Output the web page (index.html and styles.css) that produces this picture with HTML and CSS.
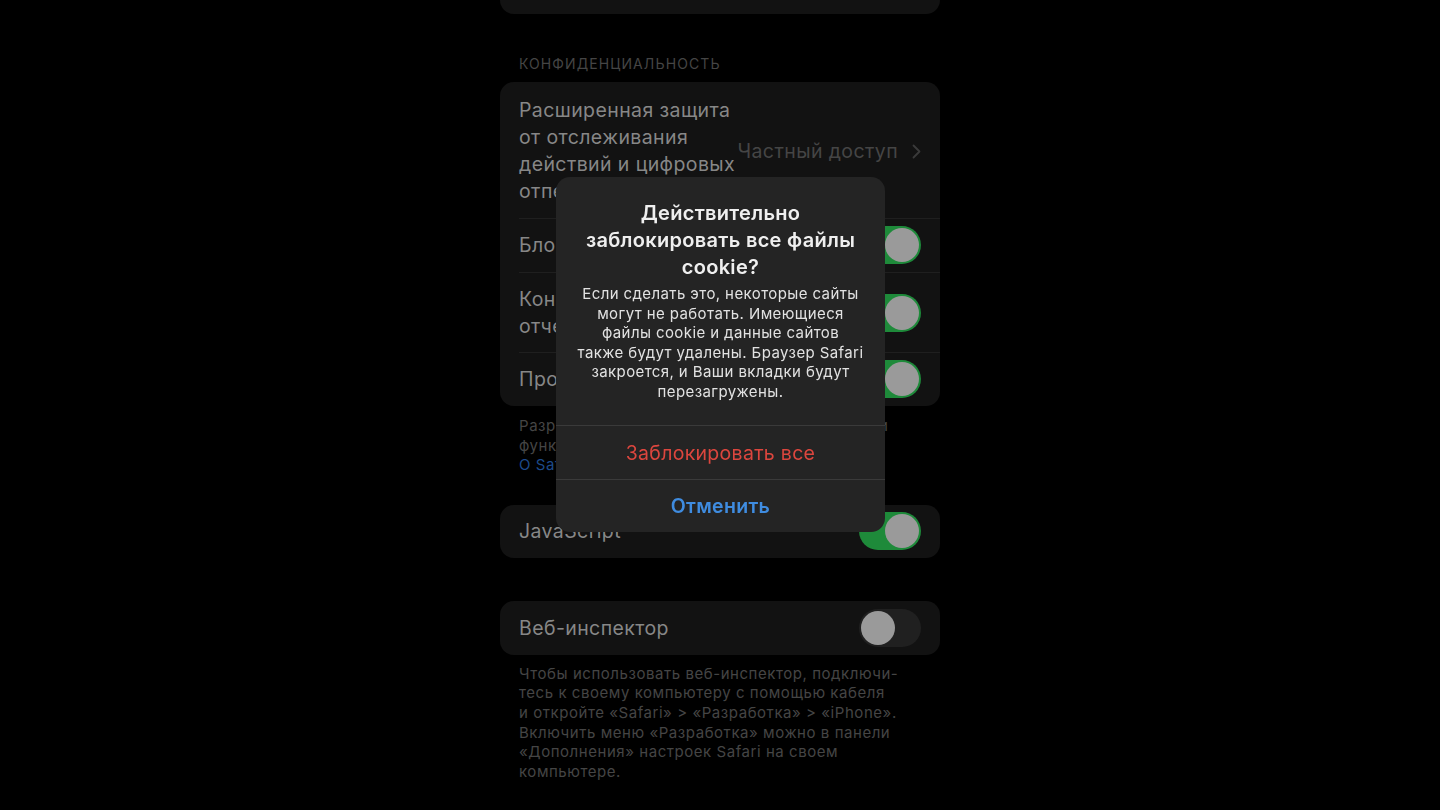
FILE: index.html
```html
<!DOCTYPE html>
<html lang="ru">

<head>
  <meta charset="UTF-8" />
  <meta name="viewport" content="width=device-width, initial-scale=1.0" />
  <title>Safari</title>
  <link rel="stylesheet" href="styles.css">
</head>

<body>
  <div class="screen">
    <div class="group group-top">
      <div class="row"></div>
    </div>

    <div class="section-header">Конфиденциальность</div>
    <div class="group">
      <div class="row row-tall">
        <span class="row-label">Расширенная защита<br>от отслеживания<br>действий и цифровых<br>отпечатков</span>
        <span class="row-value">Частный доступ</span>
        <svg class="chevron" width="9" height="15" viewBox="0 0 9 15">
          <path d="M1.5 1.5 L7.5 7.5 L1.5 13.5" fill="none" stroke="currentColor" stroke-width="1.8" stroke-linecap="round" stroke-linejoin="round" />
        </svg>
      </div>
      <div class="row">
        <span class="row-label">Блокировка всех cookie</span>
        <span class="toggle on"></span>
      </div>
      <div class="row row-double">
        <span class="row-label">Конфиденциальные<br>отчеты о рекламе</span>
        <span class="toggle on"></span>
      </div>
      <div class="row">
        <span class="row-label">Проверка Apple Pay</span>
        <span class="toggle on"></span>
      </div>
    </div>
    <div class="section-footer footer-first">
      Разрешить веб-сайтам проверять, включен ли<br>функционал Apple Pay и Apple Card.<br>
      <span class="link">О Safari и конфиденциальности…</span>
    </div>

    <div class="group group-js">
      <div class="row">
        <span class="row-label">JavaScript</span>
        <span class="toggle on"></span>
      </div>
    </div>

    <div class="group group-inspector">
      <div class="row">
        <span class="row-label">Веб-инспектор</span>
        <span class="toggle"></span>
      </div>
    </div>
    <div class="section-footer footer-last">
      Чтобы использовать веб-инспектор, подключи-<br>тесь к своему компьютеру с помощью кабеля<br>и откройте «Safari» &gt; «Разработка» &gt; «iPhone».<br>
      Включить меню «Разработка» можно в панели<br>«Дополнения» настроек Safari на своем<br>компьютере.
    </div>
  </div>

  <div class="overlay">
    <div class="alert">
      <div class="alert-body">
        <div class="alert-title">Действительно<br>заблокировать все файлы<br>cookie?</div>
        <div class="alert-message">Если сделать это, некоторые сайты<br>могут не работать. Имеющиеся<br>файлы cookie и данные сайтов<br>также будут удалены. Браузер Safari<br>закроется, и Ваши вкладки будут<br>перезагружены.</div>
      </div>
      <button class="alert-action destructive">Заблокировать все</button>
      <button class="alert-action cancel">Отменить</button>
    </div>
  </div>
</body>

</html>
```

FILE: styles.css
```css
:root {
  --card-bg: #121212;
  --separator: #1f1f1f;
  --label-color: #878787;
  --muted-color: #454545;
  --green: #1e8a3a;
  --knob: #9a9a9a;
}

html,
body {
  height: 100%;
}

body {
  margin: 0;
  background-color: #000;
  font-family: 'Inter', 'Noto Sans', sans-serif;
  overflow: hidden;
}

.screen {
  width: 440px;
  margin: 0 auto;
}

.group {
  background-color: var(--card-bg);
  border-radius: 14px;
  overflow: hidden;
}

.group-top {
  margin-top: -40px;
}

.row {
  display: flex;
  align-items: center;
  min-height: 54px;
  padding: 1px 19px 0;
  box-sizing: border-box;
  position: relative;
  font-size: 19.5px;
  line-height: 27px;
  color: var(--label-color);
  letter-spacing: 0.4px;
}

.row + .row::before {
  content: '';
  position: absolute;
  top: 0;
  left: 19px;
  right: 0;
  height: 1px;
  background-color: var(--separator);
}

.row-tall {
  padding-top: 15px;
  padding-bottom: 13px;
}

.row-double {
  padding-top: 14px;
  padding-bottom: 12px;
  min-height: 80px;
}

.row-label {
  flex: 1;
  white-space: nowrap;
}

.row-value {
  color: var(--muted-color);
  margin-right: 14px;
}

.chevron {
  color: #3a3a3a;
}

.toggle {
  width: 62px;
  height: 38px;
  border-radius: 19px;
  background-color: #202020;
  position: relative;
  flex-shrink: 0;
  margin-top: -1px;
}

.toggle::after {
  content: '';
  position: absolute;
  top: 2px;
  left: 2px;
  width: 34px;
  height: 34px;
  border-radius: 50%;
  background-color: var(--knob);
}

.toggle.on {
  background-color: var(--green);
}

.toggle.on::after {
  left: 26px;
}

.section-header {
  padding: 41px 19px 9px;
  font-size: 14px;
  line-height: 18px;
  color: var(--muted-color);
  text-transform: uppercase;
  letter-spacing: 1.1px;
}

.section-footer {
  padding: 0 19px;
  font-size: 15px;
  line-height: 19.6px;
  color: var(--muted-color);
  white-space: nowrap;
  letter-spacing: 0.55px;
}

.footer-first {
  padding-top: 10px;
}

.footer-last {
  padding-top: 9px;
}

.link {
  color: #1d4a8a;
}

.group-js {
  margin-top: 30px;
}

.group-js .row {
  min-height: 53px;
}

.group-inspector {
  margin-top: 43px;
}

.overlay {
  position: fixed;
  inset: 0;
  display: flex;
  justify-content: center;
  align-items: flex-start;
  padding-top: 177px;
}

.alert {
  width: 329px;
  background-color: #242424;
  border-radius: 14px;
  overflow: hidden;
  text-align: center;
  margin-left: 1px;
}

.alert-body {
  padding: 23px 10px 24px;
}

.alert-title {
  font-size: 20px;
  line-height: 27px;
  font-weight: 600;
  color: #efefef;
  letter-spacing: 0.3px;
}

.alert-message {
  margin-top: 3px;
  font-size: 15px;
  line-height: 19.5px;
  color: #e2e2e2;
  white-space: nowrap;
  letter-spacing: 0.4px;
}

.alert-action {
  display: block;
  width: 100%;
  height: 54px;
  margin: 0;
  padding: 0;
  border: 0;
  border-top: 1px solid #3a3a3a;
  background: transparent;
  font-family: inherit;
  font-size: 19.5px;
  letter-spacing: 0.3px;
  cursor: pointer;
}

.alert-action.destructive {
  color: #dc463e;
}

.alert-action.cancel {
  color: #3f8ce0;
  font-weight: 600;
  height: 53px;
}
```
